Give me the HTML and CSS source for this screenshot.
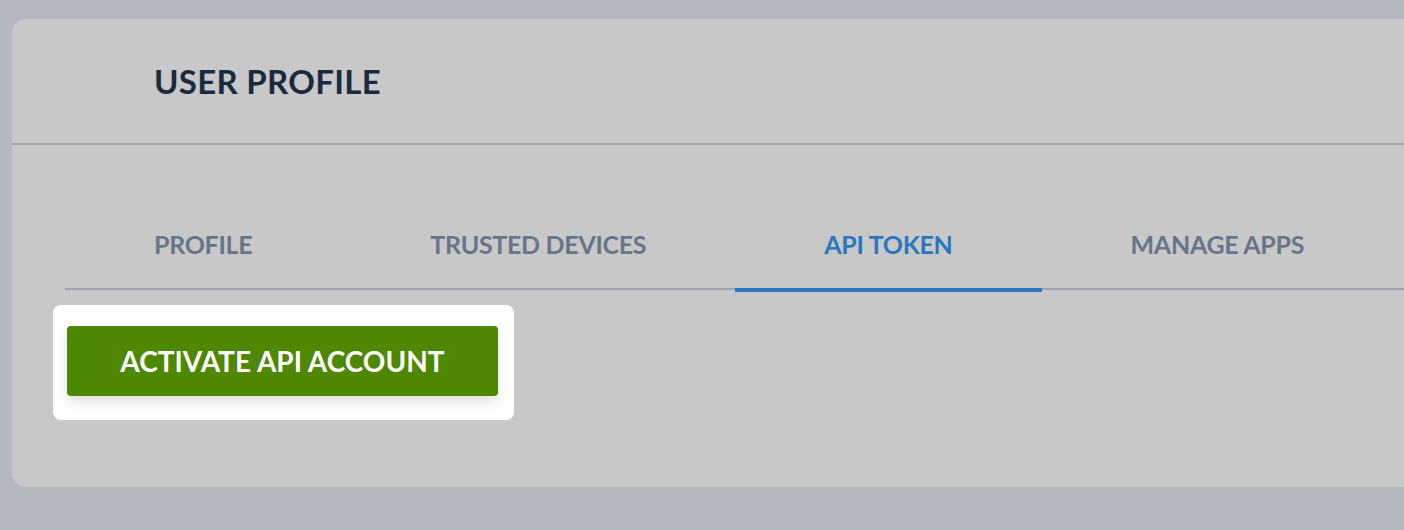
FILE: index.html
```html
<!DOCTYPE html>
<html>
<head>
<meta charset="utf-8">
<link rel="stylesheet" href="styles.css">
</head>
<body>
<div class="card">
  <div class="card-header"><h1 class="title">USER PROFILE</h1></div>
  <div class="card-body">
    <nav class="tabs">
      <a class="tab">PROFILE</a>
      <a class="tab">TRUSTED DEVICES</a>
      <a class="tab active">API TOKEN</a>
      <a class="tab">MANAGE APPS</a>
    </nav>
    <div class="spot">
      <button class="btn">ACTIVATE API ACCOUNT</button>
    </div>
  </div>
</div>
</body>
</html>
```
FILE: styles.css
```css
html, body { margin: 0; padding: 0; }
body {
  background: #b3b8c0;
  width: 1404px;
  height: 530px;
  overflow: hidden;
  font-family: Lato, "Liberation Sans", sans-serif;
}
.card {
  margin: 19px -30px 0 12px;
  height: 468px;
  background: #c8c8c8;
  border-radius: 14px;
  box-sizing: border-box;
}
.card-header {
  height: 124px;
  border-bottom: 2px solid #9aa3ae;
  display: flex;
  align-items: center;
  padding-left: 142px;
}
.title {
  margin: 0;
  font-size: 33px;
  font-weight: 700;
  color: #1a2b40;
  letter-spacing: 0.3px;
}
.card-body {
  padding-left: 41px;
}
.tabs {
  display: flex;
  margin-left: 12px;
  border-bottom: 2px solid #9aa3ae;
  height: 145px;
  box-sizing: border-box;
}
.tab {
  display: flex;
  align-items: center;
  padding: 52px 89px 0;
  height: 145px;
  box-sizing: border-box;
  font-size: 25px;
  font-weight: 700;
  letter-spacing: -0.3px;
  color: #66758a;
  position: relative;
}
.tab.active { color: #2a77c0; }
.tab.active::after {
  content: "";
  position: absolute;
  left: 0; right: 0; bottom: -2px;
  height: 4px;
  background: #2a77c0;
}
.spot {
  display: inline-block;
  margin-top: 15px;
  background: #ffffff;
  border-radius: 8px;
  padding: 21px 16px 24px 14px;
}
.btn {
  display: block;
  width: 431px;
  height: 70px;
  background: #4e8700;
  border: none;
  border-radius: 4px;
  color: #ffffff;
  font-family: Lato, "Liberation Sans", sans-serif;
  font-size: 28px;
  font-weight: 700;
  box-shadow: 0 6px 12px rgba(0,0,0,0.12);
  padding: 0;
}
```
